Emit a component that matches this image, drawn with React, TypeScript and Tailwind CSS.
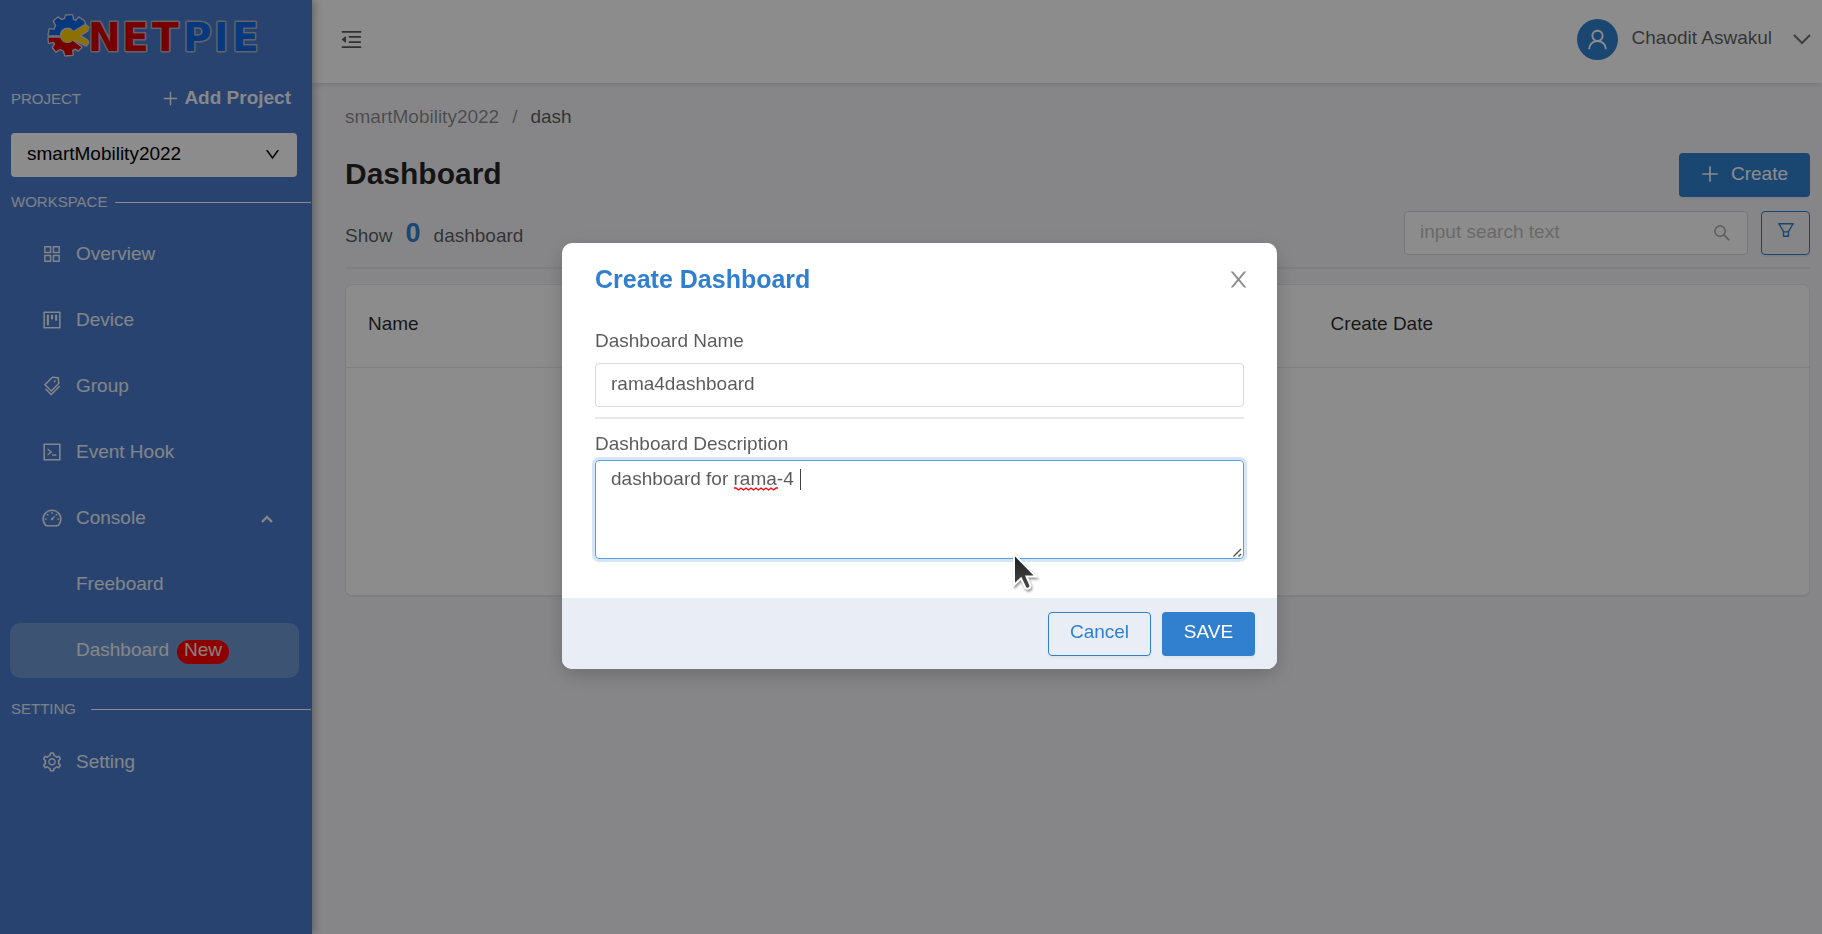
import type { ReactNode } from "react";
import {
  AiOutlineAppstore,
  AiOutlineCode,
  AiOutlineDashboard,
  AiOutlineDown,
  AiOutlineFilter,
  AiOutlineMenuFold,
  AiOutlinePlus,
  AiOutlineProject,
  AiOutlineSearch,
  AiOutlineSetting,
  AiOutlineTags,
  AiOutlineUser,
} from "react-icons/ai";

function Logo() {
  return (
    <svg width="220" height="50" viewBox="0 0 220 50" role="img" aria-label="NETPIE">
      <g transform="translate(-1 -3) scale(0.3333)" strokeLinejoin="round">
        <g fill="#d0d0d0" stroke="#d0d0d0" strokeWidth="8">
          <path d="M14 76L17 58L31 60L37 46L30 34L42 23L53 31L63 27L66 17L84 16L87 29L96 34L104 23L120 34L124 46L88 66L50 77Z" />
          <path d="M14 83H50L86 92L112 112L102 121L94 115L84 121L86 134L64 136L60 122L48 116L36 124L27 112L34 102L30 95L15 98Z" />
          <path d="M88 66L124 46L133 52L130 62L106 77L130 92L132 98L126 106L88 88A20 20 0 1 1 88 66Z" />
        </g>
        <path d="M14 76L17 58L31 60L37 46L30 34L42 23L53 31L63 27L66 17L84 16L87 29L96 34L104 23L120 34L122 42L88 62A22 22 0 0 0 48 76Z" fill="#1068e8" />
        <path d="M14 83H49A22 22 0 0 0 86 92L112 112L102 121L94 115L84 121L86 134L64 136L60 122L48 116L36 124L27 112L34 102L30 95L15 98Z" fill="#d80000" />
        <path d="M88 66L124 46L133 52L130 62L106 77L130 92L132 98L126 106L88 88A20 20 0 1 1 88 66Z" fill="#ffcc00" />
      </g>
      <g
        fontFamily="'DejaVu Sans', sans-serif"
        fontWeight="700"
        fontSize="39"
        stroke="#b4b4b4"
        strokeWidth="3"
        paintOrder="stroke"
        strokeLinejoin="round"
      >
        <text x="43 77 107" y="38" fill="#d80000">
          NET
        </text>
        <text x="138 169 187" y="38" fill="#1068e8">
          PIE
        </text>
      </g>
    </svg>
  );
}

function CloseIcon() {
  return (
    <svg width="25" height="25" viewBox="0 0 1024 1024" fill="currentColor" aria-hidden="true">
      <path d="M563.8 512l262.500-312.900c4.400-5.200.7-13.100-6.100-13.100h-79.800c-4.700 0-9.200 2.100-12.300 5.700L511.600 449.800 295.100 191.700c-3-3.600-7.500-5.700-12.300-5.700H203c-6.800 0-10.500 7.900-6.100 13.100L459.400 512 196.900 824.900A7.950 7.950 0 0 0 203 838h79.800c4.700 0 9.200-2.100 12.300-5.700l216.500-258.100 216.500 258.100c3 3.600 7.500 5.700 12.300 5.700h79.800c6.800 0 10.500-7.900 6.100-13.100L563.800 512z" />
    </svg>
  );
}

function SectionTitle({ children }: { children: ReactNode }) {
  return (
    <h2 className="flex h-6 items-center gap-2 pl-[11px] text-[15px] leading-6 text-white/85">
      {children}
      <span className="mr-px h-px flex-1 bg-white" />
    </h2>
  );
}

function NavItem({
  icon,
  label,
  active,
  children,
}: {
  icon?: ReactNode;
  label: string;
  active?: boolean;
  children?: ReactNode;
}) {
  return (
    <li>
      <a
        href="#"
        className={
          active
            ? "flex h-[55px] items-center rounded-[10px] bg-[#6f98d4] pb-[2px] pl-[31px] text-white/90"
            : "flex h-[55px] items-center rounded-[10px] pb-[2px] pl-[31px] text-white/90"
        }
      >
        <span className="flex w-[35px] shrink-0">{icon}</span>
        <span>{label}</span>
        {children}
      </a>
    </li>
  );
}

function Sidebar() {
  return (
    <aside className="relative z-20 w-[312px] shrink-0 bg-[#4a7bcb] shadow-[2px_0_8px_rgba(29,35,41,0.35)]">
      <div className="flex h-[72px] pt-[13px] pl-[45px]">
        <Logo />
      </div>
      <div className="flex h-[54px] items-center justify-between pr-[21px] pl-[11px]">
        <h2 className="text-[15px] text-white/85">PROJECT</h2>
        <button type="button" className="flex items-center gap-1 pb-[2px] font-bold text-white/95">
          <AiOutlinePlus size={19} />
          Add Project
        </button>
      </div>
      <div className="relative mt-[7px] mr-[15px] ml-[11px]">
        <select
          aria-label="Project"
          className="block h-11 w-full appearance-none rounded bg-white px-4 pb-[3px] text-black"
        >
          <option>smartMobility2022</option>
        </select>
        <AiOutlineDown
          size={17}
          strokeWidth={12}
          className="pointer-events-none absolute top-[13px] right-4 text-black"
        />
      </div>
      <nav>
        <div className="mt-[13px]">
          <SectionTitle>WORKSPACE</SectionTitle>
        </div>
        <ul className="mt-[13px] mr-[13px] ml-[10px] flex flex-col gap-[11px]">
          <NavItem icon={<AiOutlineAppstore size={22} />} label="Overview" />
          <NavItem icon={<AiOutlineProject size={22} />} label="Device" />
          <NavItem icon={<AiOutlineTags size={22} />} label="Group" />
          <NavItem icon={<AiOutlineCode size={22} />} label="Event Hook" />
          <NavItem icon={<AiOutlineDashboard size={22} />} label="Console">
            <svg width="12" height="8" viewBox="0 0 12 8" className="mt-[2px] mr-[26px] ml-auto" aria-hidden="true">
              <path d="M1 7L6 2L11 7" fill="none" stroke="currentColor" strokeWidth="2.4" />
            </svg>
          </NavItem>
          <NavItem label="Freeboard" />
          <NavItem label="Dashboard" active>
            <span className="mt-1 ml-2 flex h-6 items-center rounded-full bg-[#ff0000] px-[7px] pb-[3px]">
              New
            </span>
          </NavItem>
        </ul>
        <div className="mt-[19px]">
          <SectionTitle>
            <span className="mr-[7px]">SETTING</span>
          </SectionTitle>
        </div>
        <ul className="mt-[14px] mr-[13px] ml-[10px]">
          <NavItem icon={<AiOutlineSetting size={22} />} label="Setting" />
        </ul>
      </nav>
    </aside>
  );
}

function Header() {
  return (
    <header className="relative z-10 flex h-[83px] items-center justify-between bg-white pr-[11px] pb-[5px] pl-[27px] shadow-[0_1px_6px_rgba(0,21,41,0.15)]">
      <button type="button" aria-label="Collapse menu">
        <AiOutlineMenuFold size={25} />
      </button>
      <button type="button" className="flex items-center">
        <span className="flex size-[41px] items-center justify-center rounded-full bg-[#3180d0] text-white">
          <AiOutlineUser size={25} />
        </span>
        <span className="ml-[14px] pb-[3px]">Chaodit Aswakul</span>
        <svg width="18" height="11" viewBox="0 0 18 11" className="ml-[21px] text-black/55" aria-hidden="true">
          <path d="M1 1L9 9L17 1" fill="none" stroke="currentColor" strokeWidth="2" />
        </svg>
      </button>
    </header>
  );
}

function Content() {
  return (
    <main className="pt-[21px] pr-3 pl-[33px]">
      <nav aria-label="Breadcrumb" className="flex gap-[13px] leading-[26px]">
        <a href="#" className="text-black/45">
          smartMobility2022
        </a>
        <span className="text-black/45">/</span>
        <span>dash</span>
      </nav>
      <div className="mt-[23px] flex h-11 items-center justify-between">
        <h1 className="pb-[2px] text-[30px] font-bold text-black/85">Dashboard</h1>
        <button
          type="button"
          className="flex h-11 items-center gap-[10px] rounded bg-[#3180d0] pr-[22px] pb-[2px] pl-5 text-white shadow-[0_2px_2px_rgba(0,0,0,0.06)]"
        >
          <AiOutlinePlus size={22} />
          Create
        </button>
      </div>
      <div className="mt-[14px] flex items-start justify-between border-b-2 border-[#e8e8e8] pb-3">
        <p className="-mb-1 flex items-baseline gap-[13px] pt-[2px] leading-10">
          Show <strong className="text-[27px] text-[#3180d0]">0</strong> dashboard
        </p>
        <div className="flex gap-[13px]">
          <div className="relative">
            <input
              type="text"
              aria-label="Search"
              placeholder="input search text"
              className="block h-11 w-[344px] rounded border border-[#d9d9d9] bg-white pr-12 pb-[2px] pl-[15px] placeholder:text-[#bfbfbf]"
            />
            <AiOutlineSearch size={20} className="absolute top-3 right-4 text-black/35" />
          </div>
          <button
            type="button"
            aria-label="Filter"
            className="flex h-11 w-[49px] items-center justify-center rounded border border-[#3180d0] pb-[6px] text-[#3180d0] shadow-[0_2px_2px_rgba(0,0,0,0.06)]"
          >
            <AiOutlineFilter size={20} />
          </button>
        </div>
      </div>
      <div className="mt-[15px] overflow-hidden rounded-[7px] border border-b-2 border-[#e8e8e8] bg-white">
        <table className="w-full table-fixed">
          <thead>
            <tr className="h-[82px] border-b border-[#e8e8e8] text-left text-black/85">
              <th className="w-[66%] pb-1 pl-[22px] font-normal">Name</th>
              <th className="pb-1 pl-[19px] font-normal">Create Date</th>
            </tr>
          </thead>
          <tbody>
            <tr className="h-[228px]">
              <td colSpan={2} />
            </tr>
          </tbody>
        </table>
      </div>
    </main>
  );
}

function Pointer() {
  return (
    <svg
      width="34"
      height="46"
      viewBox="0 0 34 46"
      className="absolute top-[308px] left-[448px]"
      aria-hidden="true"
    >
      <defs>
        <linearGradient id="pointer" x1="0" y1="0" x2="0" y2="1">
          <stop offset="0" stopColor="#1c1c1c" />
          <stop offset="1" stopColor="#4a4a4a" />
        </linearGradient>
      </defs>
      <path
        d="M4 3V34L11 27.500L15.500 37A3 3 0 0 0 20.500 34.500L16.500 25.500H26Z"
        fill="url(#pointer)"
        stroke="#ffffff"
        strokeWidth="2"
        className="drop-shadow-[1px_2px_1px_rgba(0,0,0,0.4)]"
      />
    </svg>
  );
}

function CreateDialog() {
  return (
    <div className="fixed inset-0 z-30 flex items-start justify-center bg-black/45 pt-[243px] pl-[17px]">
      <section
        role="dialog"
        aria-modal="true"
        aria-labelledby="dialog-title"
        className="relative w-[715px] rounded-[10px] bg-white shadow-[0_6px_22px_rgba(0,0,0,0.2)]"
      >
        <div className="flex h-[74px] items-center justify-between pr-[26px] pb-[2px] pl-[33px]">
          <h2 id="dialog-title" className="text-[25px] font-bold text-[#3180d0]">
            Create Dashboard
          </h2>
          <button type="button" aria-label="Close" className="text-black/45">
            <CloseIcon />
          </button>
        </div>
        <form className="flex flex-col px-[33px] pb-[39px]">
          <label htmlFor="name" className="mt-[11px] leading-[26px]">
            Dashboard Name
          </label>
          <input
            id="name"
            type="text"
            defaultValue="rama4dashboard"
            className="mt-[9px] h-11 rounded border border-[#d9d9d9] px-[15px] pb-[2px]"
          />
          <hr className="mt-[10px] border-t-2 border-[#e8e8e8]" />
          <label htmlFor="description" className="mt-3 leading-[26px]">
            Dashboard Description
          </label>
          <div className="relative mt-[3px] flex">
            <textarea
              id="description"
              spellCheck={false}
              defaultValue="dashboard for rama-4 "
              className="h-[99px] w-full resize-none rounded border border-[#58a0dc] px-[15px] py-[5px] leading-[26px] shadow-[0_0_0_3px_rgba(49,128,208,0.2)] outline-none"
            />
            <svg
              width="44"
              height="4"
              viewBox="0 0 44 4"
              className="absolute top-[27px] left-[139px]"
              aria-hidden="true"
            >
              <path
                d="M0 1L2 1L4.500 3L7 1L9.500 3L12 1L14.500 3L17 1L19.500 3L22 1L24.500 3L27 1L29.500 3L32 1L34.500 3L37 1L39.500 3L42 1L44 1"
                fill="none"
                stroke="#ff0000"
                strokeWidth="1.300"
              />
            </svg>
            <span className="absolute top-[9px] left-[205px] h-[21px] w-px bg-black/75" />
            <svg
              width="9"
              height="9"
              viewBox="0 0 9 9"
              className="absolute right-[2px] bottom-[2px]"
              aria-hidden="true"
            >
              <path d="M0.500 8.500L8 1M5.500 8.500L8 6" fill="none" stroke="#505050" strokeWidth="1.400" />
            </svg>
          </div>
        </form>
        <div className="flex justify-end gap-[11px] rounded-b-[10px] bg-[#e9edf5] pt-[14px] pr-[22px] pb-[13px]">
          <button
            type="button"
            className="h-11 w-[103px] rounded border border-[#3180d0] pb-[5px] text-[#3180d0] shadow-[0_2px_2px_rgba(0,0,0,0.04)]"
          >
            Cancel
          </button>
          <button
            type="button"
            className="h-11 w-[93px] rounded bg-[#3180d0] pb-[5px] text-white shadow-[0_2px_2px_rgba(0,0,0,0.04)]"
          >
            SAVE
          </button>
        </div>
        <Pointer />
      </section>
    </div>
  );
}

export default function App() {
  return (
    <div className="flex min-h-screen bg-[#f5f5f9] font-['Liberation_Sans',Arial,sans-serif] text-[19px] leading-[26px] text-black/65">
      <Sidebar />
      <div className="min-w-0 flex-1">
        <Header />
        <Content />
      </div>
      <CreateDialog />
    </div>
  );
}
